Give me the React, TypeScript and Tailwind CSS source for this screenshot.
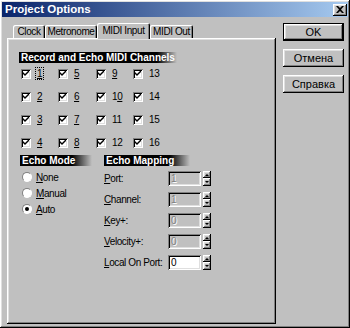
import React from 'react';

const raised =
  'shadow-[inset_-1px_-1px_#000,inset_1px_1px_#fff,inset_-2px_-2px_#808080,inset_2px_2px_#dfdfdf]';
const sunken =
  'shadow-[inset_1px_1px_#808080,inset_-1px_-1px_#fff,inset_2px_2px_#000,inset_-2px_-2px_#dfdfdf]';

function Check() {
  return (
    <svg width="7" height="7" viewBox="0 0 7 7">
      <path d="M0 2 L2 4 L6 0 L6 2 L2 6 L0 4 Z" fill="#000" />
    </svg>
  );
}

function Checkbox({ label, focus }: { label: React.ReactNode; focus?: boolean }) {
  return (
    <div className="flex items-center h-[23px]">
      <div className={`w-[10px] h-[10px] bg-white flex items-center justify-center ${sunken}`}>
        <Check />
      </div>
      <span
        className={`ml-[5px] leading-[11px] px-[1px] ${
          focus ? 'outline outline-1 outline-dotted outline-black' : ''
        }`}
      >
        {label}
      </span>
    </div>
  );
}

function Radio({ label, checked }: { label: React.ReactNode; checked?: boolean }) {
  return (
    <div className="flex items-center h-[16px]">
      <div className="w-[10px] h-[10px] rounded-full bg-white border border-t-[#808080] border-l-[#808080] border-b-white border-r-white flex items-center justify-center">
        {checked && <div className="w-[4px] h-[4px] rounded-full bg-black" />}
      </div>
      <span className="ml-[4px]">{label}</span>
    </div>
  );
}

function Header({ text, width }: { text: string; width: string }) {
  return (
    <div
      className={`h-[11px] ${width} bg-[linear-gradient(90deg,#000_0,#000_calc(100%_-_20px),#c0c0c0_100%)] text-white font-bold leading-[11px] pl-[2px] whitespace-nowrap tracking-normal`}
    >
      {text}
    </div>
  );
}

function Spinner() {
  return (
    <div className="flex flex-col w-[8px] h-[15px] ml-[2px]">
      <div className={`h-[7px] bg-[#c0c0c0] flex items-center justify-center ${raised}`}>
        <svg width="4" height="2" viewBox="0 0 4 2">
          <path d="M2 0 L4 2 L0 2 Z" fill="#000" />
        </svg>
      </div>
      <div className={`h-[8px] bg-[#c0c0c0] flex items-center justify-center ${raised}`}>
        <svg width="4" height="2" viewBox="0 0 4 2">
          <path d="M0 0 L4 0 L2 2 Z" fill="#000" />
        </svg>
      </div>
    </div>
  );
}

function Field({
  label,
  value,
  enabled,
}: {
  label: React.ReactNode;
  value: string;
  enabled?: boolean;
}) {
  return (
    <div className="flex items-center h-[21px]">
      <span className="w-[64px] whitespace-nowrap">{label}</span>
      <div
        className={`w-[33px] h-[15px] flex items-center pl-[3px] leading-[11px] ${sunken} ${
          enabled ? 'bg-white text-black' : 'bg-[#c0c0c0] text-[#808080] [text-shadow:1px_1px_#fff]'
        }`}
      >
        {value}
      </div>
      <Spinner />
    </div>
  );
}

function Tab({ text, active, width }: { text: string; active?: boolean; width: string }) {
  return (
    <div
      className={`${width} flex items-center justify-center whitespace-nowrap rounded-t-[2px] bg-[#c0c0c0] shadow-[inset_1px_1px_#fff,inset_-1px_0_#000,inset_-2px_0_#808080] ${
        active ? 'h-[16px] -mb-[1px] relative z-10 pb-[2px]' : 'h-[13px]'
      }`}
    >
      {text}
    </div>
  );
}

function Button({ text, isDefault }: { text: string; isDefault?: boolean }) {
  return (
    <div className={`w-[61px] h-[18px] ${isDefault ? 'border border-black' : ''}`}>
      <div
        className={`w-full h-full flex items-center justify-center bg-[#c0c0c0] text-[11px] tracking-normal ${raised}`}
      >
        {text}
      </div>
    </div>
  );
}

export default function App() {
  const rows: React.ReactNode[][] = [
    [<u key="a">1</u>, <u key="b">5</u>, <u key="c">9</u>, '13'],
    [<u key="a">2</u>, <u key="b">6</u>, <span key="c">1<u>0</u></span>, '14'],
    [<u key="a">3</u>, <u key="b">7</u>, '11', '15'],
    [<u key="a">4</u>, <u key="b">8</u>, '12', '16'],
  ];

  return (
    <div
      className={`w-[350px] h-[328px] bg-[#c0c0c0] p-[2px] text-[10px] tracking-[-0.4px] text-black font-['Liberation_Sans',Arial,sans-serif] select-none ${raised}`}
    >
      <div className="h-[15px] flex items-center justify-between pl-[3px] pr-[1px] bg-[linear-gradient(90deg,#0a246a,#a6caf0)]">
        <span className="text-white font-bold text-[11.5px] tracking-normal leading-[15px]">
          Project Options
        </span>
        <div className={`w-[14px] h-[12px] bg-[#c0c0c0] flex items-center justify-center ${raised}`}>
          <svg width="8" height="7" viewBox="0 0 8 7">
            <path d="M0 0 L2 0 L4 2 L6 0 L8 0 L5 3.5 L8 7 L6 7 L4 5 L2 7 L0 7 L3 3.5 Z" fill="#000" />
          </svg>
        </div>
      </div>

      <div className="flex mt-[6px]">
        <div className="ml-[5px] w-[269px]">
          <div className="flex items-end h-[15px] pl-[6px]">
            <Tab text="Clock" width="w-[32px]" />
            <Tab text="Metronome" width="w-[52px]" />
            <Tab text="MIDI Input" width="w-[53px]" active />
            <Tab text="MIDI Out" width="w-[43px]" />
          </div>
          <div className="h-[286px] pt-[14px] pl-[12px] shadow-[inset_-1px_-1px_#000,inset_1px_1px_#fff,inset_-2px_-2px_#808080,inset_2px_2px_#dfdfdf]">
            <Header text="Record and Echo MIDI Channels" width="w-[158px]" />
            <div className="grid grid-cols-[37px_38px_37px_38px] -mt-[1px] pl-[2px]">
              {rows.map((row, r) =>
                row.map((label, c) => (
                  <Checkbox key={`${r}-${c}`} label={label} focus={r === 0 && c === 0} />
                )),
              )}
            </div>
            <div className="flex mt-[1px]">
              <div className="w-[85px] pl-[1px]">
                <Header text="Echo Mode" width="w-[72px]" />
                <div className="mt-[3px] pl-[2px]">
                  <Radio label={<><u>N</u>one</>} />
                  <Radio label={<><u>M</u>anual</>} />
                  <Radio label={<><u>A</u>uto</>} checked />
                </div>
              </div>
              <div>
                <Header text="Echo Mapping" width="w-[86px]" />
                <div className="mt-[2px]">
                  <Field label={<><u>P</u>ort:</>} value="1" />
                  <Field label={<><u>C</u>hannel:</>} value="1" />
                  <Field label={<><u>K</u>ey+:</>} value="0" />
                  <Field label={<><u>V</u>elocity+:</>} value="0" />
                  <Field label={<><u>L</u>ocal On Port:</>} value="0" enabled />
                </div>
              </div>
            </div>
          </div>
        </div>

        <div className="ml-[7px] flex flex-col gap-[8px]">
          <Button text="OK" isDefault />
          <Button text="Отмена" />
          <Button text="Справка" />
        </div>
      </div>
    </div>
  );
}
